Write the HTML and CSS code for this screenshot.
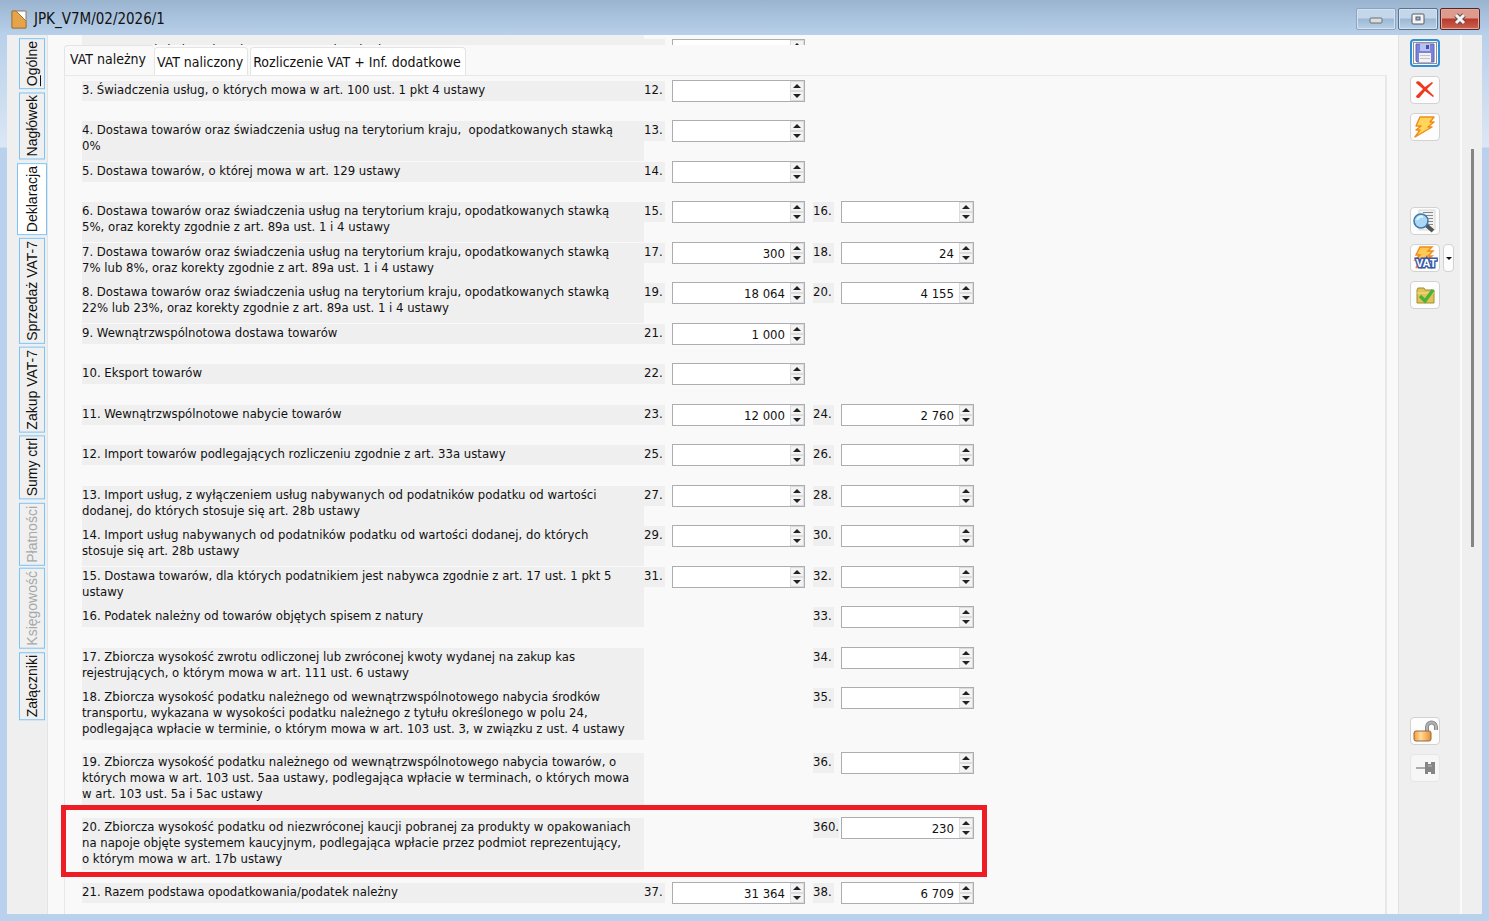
FILE: index.html
```html
<!DOCTYPE html>
<html lang="pl">
<head>
  <meta charset="UTF-8">
  <meta name="viewport" content="width=device-width, initial-scale=1.0">
  <title>JPK_V7M/02/2026/1</title>
  <link rel="stylesheet" href="styles.css">
</head>
<body>
  <header class="titlebar">
    <svg class="doc-icon" width="16" height="19" viewBox="0 0 16 19">
      <path d="M1 1h14v17H1z" fill="#fff" stroke="#8a7a66"/>
      <path d="M1 1h4l10 10v7H1z" fill="#e5a44a" stroke="#a87838"/>
    </svg>
    <h1>JPK_V7M/02/2026/1</h1>
    <div class="window-buttons">
      <button type="button" class="faded" aria-label="Minimalizuj"><svg width="16" height="12" viewBox="0 0 16 12"><rect x="2" y="5" width="12" height="5" rx="1" fill="#ddd" stroke="#6b7076"/></svg></button>
      <button type="button" aria-label="Maksymalizuj"><svg width="14" height="12" viewBox="0 0 14 12"><rect x="1" y="1" width="12" height="10" rx="1" fill="#f4f4f4" stroke="#555b66"/><rect x="5" y="4" width="4" height="3" fill="#9db8d6" stroke="#555b66"/></svg></button>
      <button type="button" class="close" aria-label="Zamknij"><svg width="14" height="12" viewBox="0 0 14 12"><path d="M3 2l8 8M11 2l-8 8" stroke="#6c4a50" stroke-width="5"/><path d="M3 2l8 8M11 2l-8 8" stroke="#f4f4f4" stroke-width="3"/></svg></button>
    </div>
  </header>

  <div class="window">
    <nav class="side-tabs">
      <button type="button"><u>O</u>gólne</button>
      <button type="button">Nagłówek</button>
      <button type="button" class="active">Deklaracja</button>
      <button type="button">Sprzedaż VAT-7</button>
      <button type="button">Zakup VAT-7</button>
      <button type="button">Sumy ctrl</button>
      <button type="button" disabled>Płatności</button>
      <button type="button" disabled>Księgowość</button>
      <button type="button">Załączniki</button>
    </nav>

    <main>
      <div class="scrolled-out">
        <div class="row">
          <p>2. Dostawa/świadczenie usług poza terytorium kraju</p>
          <label for="p11">11.</label>
          <div class="field"><input type="text" id="p11"><button type="button" class="up" aria-label="Zwiększ"></button><button type="button" class="down" aria-label="Zmniejsz"></button></div>
        </div>
      </div>

      <div class="tabs" role="tablist">
        <button type="button" role="tab" class="active" aria-selected="true">VAT należny</button>
        <button type="button" role="tab">VAT naliczony</button>
        <button type="button" role="tab">Rozliczenie VAT + Inf. dodatkowe</button>
      </div>

      <form class="panel">
        <div class="row">
          <p>3. Świadczenia usług, o których mowa w art. 100 ust. 1 pkt 4 ustawy</p>
          <label for="p12">12.</label>
          <div class="field"><input type="text" id="p12"><button type="button" class="up" aria-label="Zwiększ"></button><button type="button" class="down" aria-label="Zmniejsz"></button></div>
        </div>
        <div class="row">
          <p>4. Dostawa towarów oraz świadczenia usług na terytorium kraju,&nbsp; opodatkowanych stawką<br>0%</p>
          <label for="p13">13.</label>
          <div class="field"><input type="text" id="p13"><button type="button" class="up" aria-label="Zwiększ"></button><button type="button" class="down" aria-label="Zmniejsz"></button></div>
        </div>
        <div class="row">
          <p>5. Dostawa towarów, o której mowa w art. 129 ustawy</p>
          <label for="p14">14.</label>
          <div class="field"><input type="text" id="p14"><button type="button" class="up" aria-label="Zwiększ"></button><button type="button" class="down" aria-label="Zmniejsz"></button></div>
        </div>
        <div class="row">
          <p>6. Dostawa towarów oraz świadczenia usług na terytorium kraju, opodatkowanych stawką<br>5%, oraz korekty zgodnie z art. 89a ust. 1 i 4 ustawy</p>
          <label for="p15">15.</label>
          <div class="field"><input type="text" id="p15"><button type="button" class="up" aria-label="Zwiększ"></button><button type="button" class="down" aria-label="Zmniejsz"></button></div>
          <label class="tax" for="p16">16.</label>
          <div class="field"><input type="text" id="p16"><button type="button" class="up" aria-label="Zwiększ"></button><button type="button" class="down" aria-label="Zmniejsz"></button></div>
        </div>
        <div class="row">
          <p>7. Dostawa towarów oraz świadczenia usług na terytorium kraju, opodatkowanych stawką<br>7% lub 8%, oraz korekty zgodnie z art. 89a ust. 1 i 4 ustawy</p>
          <label for="p17">17.</label>
          <div class="field"><input type="text" id="p17" value="300"><button type="button" class="up" aria-label="Zwiększ"></button><button type="button" class="down" aria-label="Zmniejsz"></button></div>
          <label class="tax" for="p18">18.</label>
          <div class="field"><input type="text" id="p18" value="24"><button type="button" class="up" aria-label="Zwiększ"></button><button type="button" class="down" aria-label="Zmniejsz"></button></div>
        </div>
        <div class="row">
          <p>8. Dostawa towarów oraz świadczenia usług na terytorium kraju, opodatkowanych stawką<br>22% lub 23%, oraz korekty zgodnie z art. 89a ust. 1 i 4 ustawy</p>
          <label for="p19">19.</label>
          <div class="field"><input type="text" id="p19" value="18 064"><button type="button" class="up" aria-label="Zwiększ"></button><button type="button" class="down" aria-label="Zmniejsz"></button></div>
          <label class="tax" for="p20">20.</label>
          <div class="field"><input type="text" id="p20" value="4 155"><button type="button" class="up" aria-label="Zwiększ"></button><button type="button" class="down" aria-label="Zmniejsz"></button></div>
        </div>
        <div class="row">
          <p>9. Wewnątrzwspólnotowa dostawa towarów</p>
          <label for="p21">21.</label>
          <div class="field"><input type="text" id="p21" value="1 000"><button type="button" class="up" aria-label="Zwiększ"></button><button type="button" class="down" aria-label="Zmniejsz"></button></div>
        </div>
        <div class="row">
          <p>10. Eksport towarów</p>
          <label for="p22">22.</label>
          <div class="field"><input type="text" id="p22"><button type="button" class="up" aria-label="Zwiększ"></button><button type="button" class="down" aria-label="Zmniejsz"></button></div>
        </div>
        <div class="row">
          <p>11. Wewnątrzwspólnotowe nabycie towarów</p>
          <label for="p23">23.</label>
          <div class="field"><input type="text" id="p23" value="12 000"><button type="button" class="up" aria-label="Zwiększ"></button><button type="button" class="down" aria-label="Zmniejsz"></button></div>
          <label class="tax" for="p24">24.</label>
          <div class="field"><input type="text" id="p24" value="2 760"><button type="button" class="up" aria-label="Zwiększ"></button><button type="button" class="down" aria-label="Zmniejsz"></button></div>
        </div>
        <div class="row">
          <p>12. Import towarów podlegających rozliczeniu zgodnie z art. 33a ustawy</p>
          <label for="p25">25.</label>
          <div class="field"><input type="text" id="p25"><button type="button" class="up" aria-label="Zwiększ"></button><button type="button" class="down" aria-label="Zmniejsz"></button></div>
          <label class="tax" for="p26">26.</label>
          <div class="field"><input type="text" id="p26"><button type="button" class="up" aria-label="Zwiększ"></button><button type="button" class="down" aria-label="Zmniejsz"></button></div>
        </div>
        <div class="row">
          <p>13. Import usług, z wyłączeniem usług nabywanych od podatników podatku od wartości<br>dodanej, do których stosuje się art. 28b ustawy</p>
          <label for="p27">27.</label>
          <div class="field"><input type="text" id="p27"><button type="button" class="up" aria-label="Zwiększ"></button><button type="button" class="down" aria-label="Zmniejsz"></button></div>
          <label class="tax" for="p28">28.</label>
          <div class="field"><input type="text" id="p28"><button type="button" class="up" aria-label="Zwiększ"></button><button type="button" class="down" aria-label="Zmniejsz"></button></div>
        </div>
        <div class="row">
          <p>14. Import usług nabywanych od podatników podatku od wartości dodanej, do których<br>stosuje się art. 28b ustawy</p>
          <label for="p29">29.</label>
          <div class="field"><input type="text" id="p29"><button type="button" class="up" aria-label="Zwiększ"></button><button type="button" class="down" aria-label="Zmniejsz"></button></div>
          <label class="tax" for="p30">30.</label>
          <div class="field"><input type="text" id="p30"><button type="button" class="up" aria-label="Zwiększ"></button><button type="button" class="down" aria-label="Zmniejsz"></button></div>
        </div>
        <div class="row">
          <p>15. Dostawa towarów, dla których podatnikiem jest nabywca zgodnie z art. 17 ust. 1 pkt 5<br>ustawy</p>
          <label for="p31">31.</label>
          <div class="field"><input type="text" id="p31"><button type="button" class="up" aria-label="Zwiększ"></button><button type="button" class="down" aria-label="Zmniejsz"></button></div>
          <label class="tax" for="p32">32.</label>
          <div class="field"><input type="text" id="p32"><button type="button" class="up" aria-label="Zwiększ"></button><button type="button" class="down" aria-label="Zmniejsz"></button></div>
        </div>
        <div class="row">
          <p>16. Podatek należny od towarów objętych spisem z natury</p>
          <label class="tax" for="p33">33.</label>
          <div class="field"><input type="text" id="p33"><button type="button" class="up" aria-label="Zwiększ"></button><button type="button" class="down" aria-label="Zmniejsz"></button></div>
        </div>
        <div class="row">
          <p>17. Zbiorcza wysokość zwrotu odliczonej lub zwróconej kwoty wydanej na zakup kas<br>rejestrujących, o którym mowa w art. 111 ust. 6 ustawy</p>
          <label class="tax" for="p34">34.</label>
          <div class="field"><input type="text" id="p34"><button type="button" class="up" aria-label="Zwiększ"></button><button type="button" class="down" aria-label="Zmniejsz"></button></div>
        </div>
        <div class="row tall">
          <p>18. Zbiorcza wysokość podatku należnego od wewnątrzwspólnotowego nabycia środków<br>transportu, wykazana w wysokości podatku należnego z tytułu określonego w polu 24,<br>podlegająca wpłacie w terminie, o którym mowa w art. 103 ust. 3, w związku z ust. 4 ustawy</p>
          <label class="tax" for="p35">35.</label>
          <div class="field"><input type="text" id="p35"><button type="button" class="up" aria-label="Zwiększ"></button><button type="button" class="down" aria-label="Zmniejsz"></button></div>
        </div>
        <div class="row tall">
          <p>19. Zbiorcza wysokość podatku należnego od wewnątrzwspólnotowego nabycia towarów, o<br>których mowa w art. 103 ust. 5aa ustawy, podlegająca wpłacie w terminach, o których mowa<br>w art. 103 ust. 5a i 5ac ustawy</p>
          <label class="tax" for="p36">36.</label>
          <div class="field"><input type="text" id="p36"><button type="button" class="up" aria-label="Zwiększ"></button><button type="button" class="down" aria-label="Zmniejsz"></button></div>
        </div>
        <div class="row tall highlight">
          <p>20. Zbiorcza wysokość podatku od niezwróconej kaucji pobranej za produkty w opakowaniach<br>na napoje objęte systemem kaucyjnym, podlegająca wpłacie przez podmiot reprezentujący,<br>o którym mowa w art. 17b ustawy</p>
          <label class="tax" for="p360">360.</label>
          <div class="field"><input type="text" id="p360" value="230"><button type="button" class="up" aria-label="Zwiększ"></button><button type="button" class="down" aria-label="Zmniejsz"></button></div>
        </div>
        <div class="row">
          <p>21. Razem podstawa opodatkowania/podatek należny</p>
          <label for="p37">37.</label>
          <div class="field"><input type="text" id="p37" value="31 364"><button type="button" class="up" aria-label="Zwiększ"></button><button type="button" class="down" aria-label="Zmniejsz"></button></div>
          <label class="tax" for="p38">38.</label>
          <div class="field"><input type="text" id="p38" value="6 709"><button type="button" class="up" aria-label="Zwiększ"></button><button type="button" class="down" aria-label="Zmniejsz"></button></div>
        </div>
      </form>
    </main>

    <aside class="toolbar">
      <div class="tool-group">
        <button type="button" class="tool focused" aria-label="Zapisz">
          <svg width="26" height="24" viewBox="0 0 26 24"><rect x="1.5" y="1.5" width="23" height="21" fill="none" stroke="#222" stroke-dasharray="1 1"/><path d="M4 3h18v18H5l-1-1z" fill="#7b83d8" stroke="#5e63bd"/><path d="M8 3h10v7H8z" fill="#b9c0f2"/><path d="M14 4h3v4h-3z" fill="#4a50a8"/><path d="M7 12h12v9H7z" fill="#f3f3f3"/><path d="M8 14.5h10M8 17.5h10" stroke="#c4c4c8"/></svg>
        </button>
        <button type="button" class="tool" aria-label="Anuluj">
          <svg width="24" height="24" viewBox="0 0 24 24"><path d="M3 5c0-2 3-2 4-1l5 5 7-5 1 1-6 6 7 7-1 1-8-6-5 6c-1 2-4 1-4-1l7-7z" fill="#ee3a1c"/></svg>
        </button>
        <button type="button" class="tool" aria-label="Przelicz">
          <svg width="24" height="24" viewBox="0 0 24 24"><path d="M7 2h14l-4 5h4l-6 5h4L2 22l5-7H3l5-4H3z" fill="#ffd65a" stroke="#f18a18" stroke-width="1.4" stroke-linejoin="round"/></svg>
        </button>
      </div>
      <div class="tool-group preview">
        <button type="button" class="tool" aria-label="Podgląd">
          <svg width="26" height="24" viewBox="0 0 26 24"><path d="M7 1h16v20H7z" fill="#f1f1f1" stroke="#d8d8d8"/><path d="M11 3.5h10M14 6.5h7M16 9.5h5M16 12.5h5M15 15.5h6" stroke="#888"/><path d="M14 16l7 6" stroke="#555" stroke-width="4"/><circle cx="9" cy="12" r="7" fill="#a9d7f5" stroke="#3f78ae" stroke-width="1.6"/><path d="M5 11c1-3 4-4 6-3" fill="none" stroke="#e4f5ff" stroke-width="2"/></svg>
        </button>
        <div class="split">
          <button type="button" class="tool" aria-label="Przelicz VAT">
            <svg width="26" height="24" viewBox="0 0 26 24"><path d="M8 1h12l-4 4h5l-5 5h4l-9 6-7 6 3-8H3l5-5H4z" fill="#ffc955" stroke="#f18a18" stroke-width="1.4"/><text class="vat" x="4" y="21">VAT</text></svg>
          </button>
          <button type="button" class="drop" aria-label="Więcej"></button>
        </div>
        <button type="button" class="tool" aria-label="Zatwierdź">
          <svg width="24" height="24" viewBox="0 0 24 24"><path d="M4 7l1-2h6l1 2h9v13H4z" fill="#e2c354" stroke="#a48a2c"/><path d="M4 10h17" stroke="#f5e19a"/><path d="M7 13l5 5 8-11" fill="none" stroke="#47b33c" stroke-width="3.4"/></svg>
        </button>
      </div>
      <div class="tool-group last">
        <button type="button" class="tool" aria-label="Odblokuj">
          <svg width="28" height="24" viewBox="0 0 28 24"><defs><linearGradient id="lock"><stop offset="0" stop-color="#f59a35"/><stop offset=".4" stop-color="#ffdc9b"/><stop offset="1" stop-color="#ee8b2c"/></linearGradient></defs><path d="M16 12V8c0-6 9-6 9 0v3" fill="none" stroke="#888" stroke-width="4"/><path d="M16 12V8c0-6 9-6 9 0v3" fill="none" stroke="#b4b4b4" stroke-width="2"/><rect x="3" y="12" width="17" height="10" rx="2" fill="url(#lock)" stroke="#8d6b48"/></svg>
        </button>
        <button type="button" class="tool" disabled aria-label="Przypnij">
          <svg width="24" height="24" viewBox="0 0 24 24"><path d="M3 12h10" stroke="#aaa" stroke-width="2"/><path d="M12 6h3v2h3V6h4v12h-4v-2h-3v2h-3z" fill="#858585"/><path d="M15 10h4" stroke="#bbb"/></svg>
        </button>
      </div>
    </aside>
    <div class="scrollbar"><div class="thumb"></div></div>
  </div>
</body>
</html>
```
FILE: styles.css
```css
*,
*::before,
*::after {
  box-sizing: border-box;
}

body {
  display: flex;
  flex-direction: column;
  height: 100vh;
  margin: 0;
  padding: 0 7px 7px;
  overflow: hidden;
  background: linear-gradient(#9ab4d0, #b8d0ea 35px, #dbe7f5 147px, #b9d1ec 148px);
  color: #111;
  font-family: "DejaVu Sans Condensed", Tahoma, "Noto Sans", sans-serif;
  font-size: 13px;
  line-height: 16px;
}

button,
input {
  margin: 0;
  padding: 0;
  color: inherit;
  font: inherit;
}

/* title bar */
.titlebar {
  display: flex;
  flex: none;
  align-items: center;
  height: 35px;
  padding: 3px 2px 0 4px;
}

.titlebar h1 {
  flex: 1;
  margin: 0 0 0 7px;
  font-size: 15px;
  font-weight: normal;
}

.window-buttons {
  display: flex;
  gap: 2px;
}

.window-buttons button {
  display: flex;
  align-items: center;
  justify-content: center;
  width: 40px;
  height: 22px;
  border: 1px solid #5d728c;
  border-radius: 2px;
  background: linear-gradient(#c4d6e9 45%, #9db8d4 50%, #b9d0e8);
  box-shadow: inset 0 0 0 1px #d5e3f1;
}

.window-buttons .faded {
  border-color: #8ea4bf;
}

.window-buttons .close {
  border-color: #55252a;
  background: linear-gradient(#dd9b8d 45%, #b8392a 50%, #cb6350);
  box-shadow: inset 0 0 0 1px #e2a99e;
}

.window {
  display: flex;
  flex: 1;
  min-height: 0;
  background: #efefef;
}

/* vertical tabs on the left */
.side-tabs {
  display: flex;
  flex: none;
  flex-direction: column;
  align-items: center;
  gap: 3px;
  width: 41px;
  padding: 3px 0 0 10px;
  border-right: 1px solid #e4e4e4;
}

.side-tabs button {
  width: 26px;
  padding: 2px 3px;
  border: 1px solid #7cc4f8;
  background: #f0f0f0;
  font-family: "Liberation Sans", Arial, sans-serif;
  font-size: 14px;
  line-height: 16px;
  white-space: nowrap;
  writing-mode: vertical-rl;
  transform: rotate(180deg);
}

.side-tabs .active {
  width: 30px;
  background: #fff;
}

.side-tabs button:disabled {
  color: #a8a8a8;
}

main {
  display: flex;
  flex: 1;
  flex-direction: column;
  min-width: 0;
  padding: 0 11px 0 16px;
  background: #f9f9f9;
}

/* the row that is scrolled under the tabs */
.scrolled-out {
  flex: none;
  height: 10px;
  padding: 0 18px;
  overflow: hidden;
}

.scrolled-out .row p {
  margin: 0;
  padding-top: 7px;
}

.scrolled-out label,
.scrolled-out .field {
  margin-top: 4px;
}

/* top tabs */
.tabs {
  display: flex;
  flex: none;
  align-items: flex-end;
  height: 30px;
}

.tabs button {
  height: 28px;
  margin-right: 2px;
  padding: 0 4px 0 2px;
  border: 1px solid #e4e4e4;
  border-bottom: 0;
  border-radius: 4px 4px 0 0;
  background: #fff;
  font-size: 14px;
  white-space: nowrap;
}

.tabs .active {
  height: 30px;
  margin-right: 0;
  padding: 0 8px 4px 5px;
  border-right: 0;
  background: #f9f9f9;
}

.panel {
  flex: 1;
  min-height: 0;
  padding: 4px 17px 0;
  border: 1px solid #e8e8e8;
  border-width: 1px 2px 0 1px;
}

.row {
  display: grid;
  grid-template-columns: 562px 28px 133px 8px 28px 133px;
  align-items: start;
  height: 40px;
}

.row:nth-child(even) {
  height: 41px;
}

.row.tall {
  height: 65px;
}

.row p {
  min-height: 20px;
  margin: 1px 0 0;
  padding: 1px 0 3px;
  background: #efefef;
  white-space: nowrap;
}

.row p:has(br) {
  min-height: 40px;
}

.row label {
  justify-self: start;
  min-width: 21px;
  margin-top: 1px;
  padding: 1px 0 3px;
  background: #efefef;
}

.row .tax {
  grid-column: 5;
}

.field {
  display: grid;
  grid-template-columns: 1fr 14px;
  grid-template-rows: 10px 10px;
  height: 22px;
  border: 1px solid #abadb3;
  background: #fff;
}

.scrolled-out .row label,
.scrolled-out .row .field {
  margin-top: 4px;
}

.scrolled-out .row label {
  padding-top: 3px;
}

.field input {
  grid-row: 1 / 3;
  min-width: 0;
  padding: 2px 5px 0 0;
  border: 0;
  outline: 0;
  background: none;
  text-align: right;
}

.field button {
  display: flex;
  align-items: center;
  justify-content: center;
  border: 1px solid #dcdcdc;
  background: #f3f3f3;
}

.field button::before {
  content: "";
  border: 4px solid transparent;
  border-top-width: 0;
  border-bottom: 4px solid #222;
}

.field .down::before {
  transform: rotate(180deg);
}

.highlight {
  position: relative;
}

.highlight::after {
  content: "";
  position: absolute;
  top: -12px;
  left: -21px;
  width: 926px;
  height: 72px;
  border: 5px solid #ee1c24;
  pointer-events: none;
}

/* toolbar on the right */
.toolbar {
  display: flex;
  flex: none;
  flex-direction: column;
  gap: 66px;
  width: 64px;
  padding: 4px 0 0 11px;
  border-right: 2px solid #fafafa;
  border-left: 1px solid #e2e2e2;
}

.tool-group {
  display: flex;
  flex-direction: column;
  gap: 9px;
}

.toolbar .last {
  margin-top: auto;
  margin-bottom: 132px;
}

.tool,
.drop {
  display: flex;
  align-items: center;
  justify-content: center;
  width: 30px;
  height: 28px;
  border: 1px solid #d2d2d2;
  border-radius: 4px;
  background: #fdfdfd;
}

.tool.focused {
  border: 2px solid #2f8fd8;
}

.tool:disabled {
  border-color: #e6e6e6;
  background: #f6f6f6;
}

.tool svg {
  flex: none;
}

.split {
  display: flex;
  gap: 3px;
}

.drop {
  width: 11px;
}

.drop::before {
  content: "";
  border: 3px solid transparent;
  border-top-color: #111;
  border-bottom-width: 0;
}

.vat {
  fill: #fff;
  stroke: #3b57a5;
  stroke-width: 3px;
  paint-order: stroke;
  font-family: "Liberation Sans", Arial, sans-serif;
  font-size: 11px;
  font-weight: bold;
}

.scrollbar {
  flex: none;
  width: 20px;
  padding: 114px 8px 0 9px;
}

.thumb {
  height: 398px;
  background: #858585;
}
```
